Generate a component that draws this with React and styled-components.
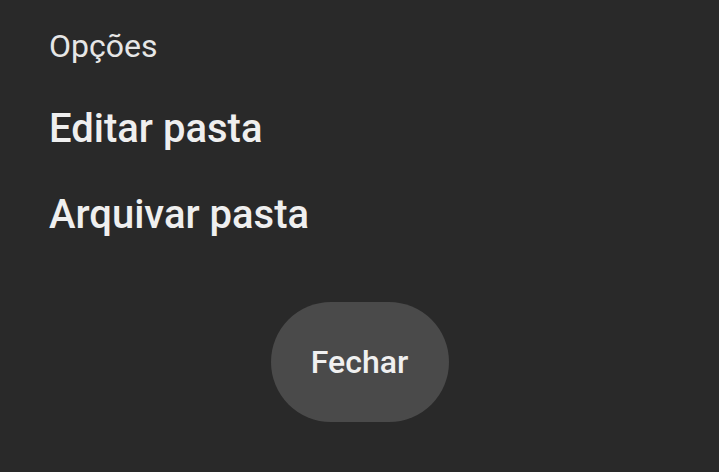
import styled, { createGlobalStyle } from 'styled-components'

const GlobalStyle = createGlobalStyle`
    html, body {
        margin: 0;
        padding: 0;
        background: #000000;
    }
    body {
        font-family: Roboto, "Noto Sans", sans-serif;
        -webkit-font-smoothing: antialiased;
    }
`

const Sheet = styled.div`
    width: 719px;
    height: 472px;
    box-sizing: border-box;
    background: #292929;
    padding: 24px 0 0 49px;
    display: flex;
    flex-direction: column;
    overflow: hidden;
`

const Title = styled.h2`
    margin: 0;
    color: #e6e6e6;
    font-size: 32px;
    font-weight: 400;
    line-height: 44px;
`

const Menu = styled.ul`
    list-style: none;
    margin: 18px 0 0;
    padding: 0;
    display: flex;
    flex-direction: column;
`

const Item = styled.li`
    color: #efefef;
    font-size: 40px;
    font-weight: 500;
    line-height: 86px;
    height: 86px;
`

const Footer = styled.div`
    display: flex;
    justify-content: center;
    padding-right: 49px;
    margin-top: 44px;
`

const Button = styled.button`
    width: 178px;
    height: 120px;
    border: none;
    border-radius: 60px;
    background: #4a4a4a;
    color: #f0f0f0;
    font-family: Roboto, "Noto Sans", sans-serif;
    font-size: 32px;
    font-weight: 500;
    cursor: pointer;
`

const App = () => {
    const options = ['Editar pasta', 'Arquivar pasta']

    return (
        <>
            <GlobalStyle />
            <Sheet>
                <Title>Opções</Title>
                <Menu>
                    {options.map((label) => (
                        <Item key={label}>{label}</Item>
                    ))}
                </Menu>
                <Footer>
                    <Button>Fechar</Button>
                </Footer>
            </Sheet>
        </>
    )
}

export default App
